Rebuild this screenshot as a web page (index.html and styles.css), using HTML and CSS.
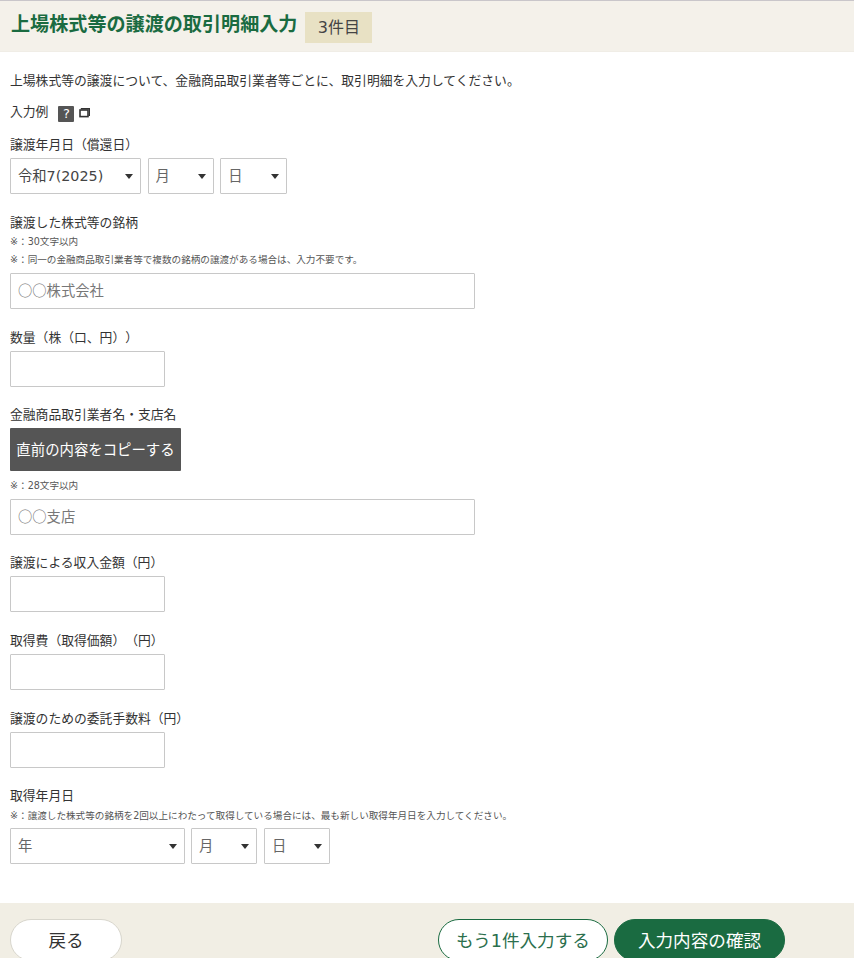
FILE: index.html
```html
<!DOCTYPE html>
<html lang="ja">
<head>
<meta charset="utf-8">
<title>上場株式等の譲渡の取引明細入力</title>
<link rel="stylesheet" href="styles.css">
</head>
<body>
<div class="page">
  <header class="head">
    <h1 class="title">上場株式等の譲渡の取引明細入力</h1>
    <span class="badge">3件目</span>
  </header>
  <main class="form">
    <p class="intro">上場株式等の譲渡について、金融商品取引業者等ごとに、取引明細を入力してください。</p>
    <div class="example">
      <span>入力例</span>
      <span class="help">?</span>
      <svg class="win" width="11" height="10" viewBox="0 0 11 10"><path d="M2.5 1.5V.8h8v6.4h-1" fill="none" stroke="#333" stroke-width="1.4"/><rect x="1" y="2" width="8" height="6.6" fill="none" stroke="#333" stroke-width="1.6"/></svg>
    </div>
    <section class="field">
      <div class="label">譲渡年月日（償還日）</div>
      <div class="dates">
        <div class="sel sel-era"><select class="ctl"><option>令和7(2025)</option></select></div>
        <div class="sel sel-small"><select class="ctl muted"><option>月</option></select></div>
        <div class="sel sel-small"><select class="ctl muted"><option>日</option></select></div>
      </div>
    </section>
    <section class="field">
      <div class="label">譲渡した株式等の銘柄</div>
      <div class="note">※：30文字以内</div>
      <div class="note note-last">※：同一の金融商品取引業者等で複数の銘柄の譲渡がある場合は、入力不要です。</div>
      <input class="text wide" placeholder="○○株式会社">
    </section>
    <section class="field">
      <div class="label">数量（株（口、円））</div>
      <input class="text narrow">
    </section>
    <section class="field">
      <div class="label">金融商品取引業者名・支店名</div>
      <button class="copy" type="button">直前の内容をコピーする</button>
      <div class="note note-last note-top">※：28文字以内</div>
      <input class="text wide" placeholder="○○支店">
    </section>
    <section class="field">
      <div class="label">譲渡による収入金額（円）</div>
      <input class="text narrow">
    </section>
    <section class="field">
      <div class="label">取得費（取得価額）（円）</div>
      <input class="text narrow">
    </section>
    <section class="field">
      <div class="label">譲渡のための委託手数料（円）</div>
      <input class="text narrow">
    </section>
    <section class="field">
      <div class="label">取得年月日</div>
      <div class="note note-last">※：譲渡した株式等の銘柄を2回以上にわたって取得している場合には、最も新しい取得年月日を入力してください。</div>
      <div class="dates">
        <div class="sel sel-year"><select class="ctl muted"><option>年</option></select></div>
        <div class="sel sel-small"><select class="ctl muted"><option>月</option></select></div>
        <div class="sel sel-small"><select class="ctl muted"><option>日</option></select></div>
      </div>
    </section>
  </main>
  <footer class="foot">
    <button class="pill back" type="button">戻る</button>
    <div class="foot-right">
      <button class="pill more" type="button">もう1件入力する</button>
      <button class="pill confirm" type="button">入力内容の確認</button>
    </div>
  </footer>
</div>
</body>
</html>
```
FILE: styles.css
```css
* { box-sizing: border-box; }
html, body { margin: 0; padding: 0; }
body {
  background: #fff;
  color: #333;
  font-family: "DejaVu Sans", "Noto Sans CJK JP", sans-serif;
  text-spacing-trim: space-all;
}
.page { height: 958px; overflow: hidden; border-top: 1px solid #c9c6ca; }
.head {
  display: flex;
  align-items: center;
  gap: 8px;
  height: 51px;
  padding: 0 10px 3px 11px;
  background: #f4f1ea;
  border-bottom: 1px solid #f0ede6;
}
.title { margin: 0; font-size: 19.1px; line-height: 28px; font-weight: 700; color: #1a6b41; white-space: nowrap; }
.badge {
  width: 67px;
  height: 31px;
  margin-top: 6px;
  line-height: 31px;
  text-align: center;
  background: #e8e1c4;
  font-size: 16px;
  color: #444;
}
.form { padding: 0 10px; }
.intro { margin: 19px 0 0; font-size: 12.8px; line-height: 20px; white-space: nowrap; }
.example { display: flex; align-items: center; height: 20px; padding-bottom: 2px; margin-top: 12px; font-size: 12.8px; line-height: 18px; }
.help {
  width: 16px;
  height: 16px;
  margin: 4px 5px 0 10px;
  background: #555;
  color: #fff;
  font-size: 13px;
  line-height: 16px;
  text-align: center;
  border-radius: 1px;
}
.win { margin-top: 2px; }
.field { margin-top: 17.7px; }
.example + .field { margin-top: 11px; }
.label { font-size: 12.8px; line-height: 21px; margin-bottom: 3px; white-space: nowrap; }
.note { font-size: 9.6px; line-height: 20px; color: #555; white-space: nowrap; }
.label + .note { margin-top: -3.5px; }
.note-last { margin-bottom: 2.5px; }
.note + .note { margin-top: -2.3px; margin-bottom: 3px; }
.copy + .note-top { margin-top: 4.3px; margin-bottom: 3px; }
.dates { display: flex; gap: 6.5px; }
.sel { position: relative; height: 36px; }
.sel::after {
  content: "";
  position: absolute;
  right: 8px;
  top: 16px;
  border-left: 4.5px solid transparent;
  border-right: 4.5px solid transparent;
  border-top: 5px solid #333;
}
.sel-era { width: 131px; }
.sel-small { width: 66.3px; }
.sel-year { width: 174.6px; }
.ctl {
  appearance: none;
  width: 100%;
  height: 36px;
  padding: 0 7px;
  background: #fff;
  border: 1px solid #c8c8c8;
  border-radius: 1px;
  font: inherit;
  font-size: 14.3px;
  color: #444;
}
.muted { color: #666; }
.text {
  display: block;
  height: 36px;
  padding: 0 7px 2px;
  border: 1px solid #c8c8c8;
  border-radius: 1px;
  background: #fff;
  font-family: "Noto Sans CJK JP", sans-serif;
  font-size: 14.3px;
  color: #444;
}
.text::placeholder { color: #777; opacity: 1; }
.wide { width: 465px; }
.narrow { width: 155px; }
.copy {
  display: block;
  width: 171px;
  height: 43px;
  padding: 0 0 3px;
  background: #555;
  color: #fff;
  border: 0;
  border-radius: 1px;
  font: inherit;
  font-size: 14.4px;
  white-space: nowrap;
}
.foot {
  display: flex;
  justify-content: space-between;
  height: 100px;
  margin-top: 39px;
  padding: 16px 69px 0 10px;
  background: #f1eee4;
}
.foot-right { display: flex; gap: 6px; }
.pill {
  height: 42px;
  border-radius: 21px;
  padding: 0 0 2px;
  font: inherit;
  font-size: 17.6px;
  white-space: nowrap;
}
.back { width: 112px; background: #fff; border: 1px solid #d8d6cd; color: #333; }
.more { width: 170px; background: #fff; border: 1px solid #1a6b41; color: #2c6f4d; }
.confirm { width: 171px; background: #1a6b41; border: 1px solid #1a6b41; color: #fff; }
```
